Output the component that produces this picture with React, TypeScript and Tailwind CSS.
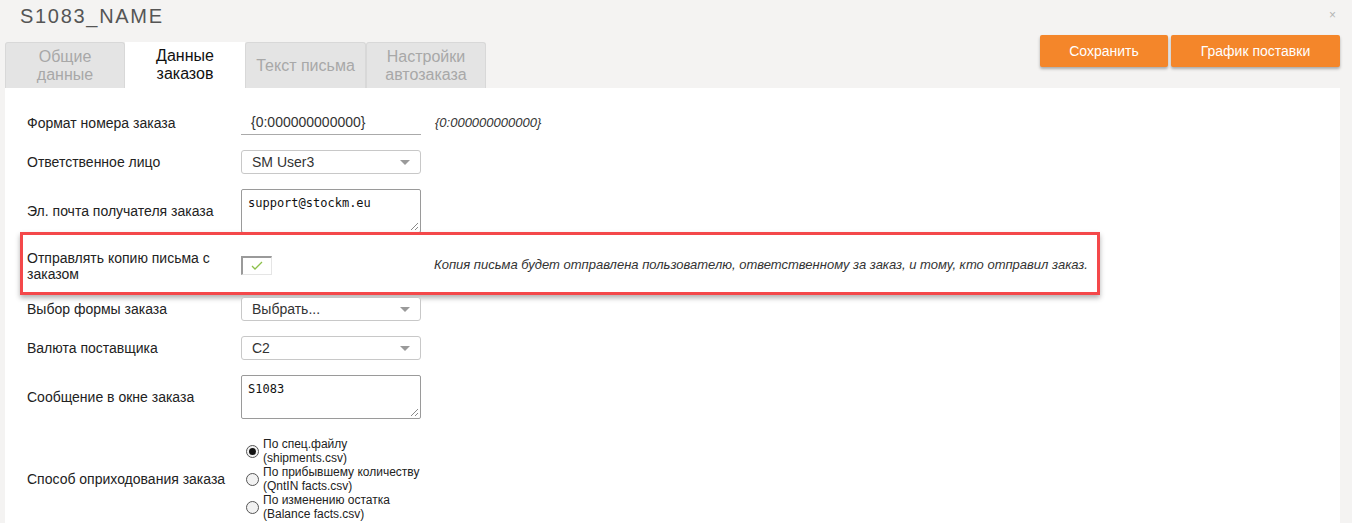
import React from "react";

const F = { fontFamily: '"Liberation Sans", Arial, sans-serif' };

function Arrow() {
  return (
    <svg width="10" height="6" viewBox="0 0 10 6" className="absolute right-[10px] top-[9px]">
      <path d="M0 0 L10 0 L5 5 Z" fill="#9a9a9a" />
    </svg>
  );
}

function Select({ value }: { value: string }) {
  return (
    <div className="relative w-[180px] h-[24px] border border-[#c8c8c8] rounded-[3px] bg-white pl-[10px] text-[14px] leading-[22px] text-[#333]">
      {value}
      <Arrow />
    </div>
  );
}

function TextArea({ value }: { value: string }) {
  return (
    <div className="relative w-[180px] h-[44px] border border-[#9a9a9a] rounded-[2px] bg-white pl-[6px] pt-[6px] text-[12px] leading-[14px] text-[#111]" style={{ fontFamily: '"DejaVu Sans Mono", monospace' }}>
      {value}
      <svg width="9" height="9" viewBox="0 0 9 9" className="absolute right-[1px] bottom-[1px]">
        <path d="M8 1 L1 8 M8 5 L5 8" stroke="#8a8a8a" strokeWidth="1" />
      </svg>
    </div>
  );
}

function Row({ label, children, h }: { label: React.ReactNode; children: React.ReactNode; h: string }) {
  return (
    <div className={`flex items-center ${h}`}>
      <div className="w-[214px] text-[14px] leading-[16px] text-[#222]">{label}</div>
      {children}
    </div>
  );
}

function Radio({ checked, l1, l2 }: { checked?: boolean; l1: string; l2: string }) {
  return (
    <div className="flex items-center">
      <div className="w-[13px] h-[13px] rounded-full border border-[#555] bg-[#f2f2f2] flex items-center justify-center ml-[5px] mr-[4px]">
        {checked && <div className="w-[7px] h-[7px] rounded-full bg-[#111]" />}
      </div>
      <div className="text-[12px] leading-[14px] text-[#222]">
        <div>{l1}</div>
        <div>{l2}</div>
      </div>
    </div>
  );
}

export default function App() {
  return (
    <div className="w-[1352px] h-[523px] bg-[#f4f3f2] overflow-hidden relative" style={F}>
      <div className="absolute right-[16px] top-[6px] text-[12px] text-[#b5b5b5]">×</div>
      <div className="pl-[20px] pt-[4px] h-[42px] text-[20px] leading-[24px] tracking-[1.7px] text-[#555]">S1083_NAME</div>
      <div className="flex items-end justify-between pl-[5px] pr-[12px]">
        <div className="flex h-[46px] items-end">
          <div className="w-[120px] h-[46px] bg-[#e4e4e4] border border-[#d8d8d8] border-b-0 rounded-t-[3px] flex items-center justify-center text-center text-[16px] leading-[18px] text-[#a8a8a8]">Общие<br />данные</div>
          <div className="w-[120px] h-[46px] bg-white flex items-center justify-center text-center text-[16px] leading-[18px] text-[#111]">Данные<br />заказов</div>
          <div className="w-[121px] h-[46px] bg-[#e4e4e4] border border-[#d8d8d8] border-b-0 rounded-t-[3px] flex items-center justify-center text-center text-[16px] leading-[18px] text-[#a8a8a8]">Текст письма</div>
          <div className="w-[120px] h-[46px] bg-[#e4e4e4] border border-[#d8d8d8] border-b-0 rounded-t-[3px] flex items-center justify-center text-center text-[16px] leading-[18px] text-[#a8a8a8]">Настройки<br />автозаказа</div>
        </div>
        <div className="flex gap-[3px] self-start -mt-[7px]">
          <button className="w-[128px] h-[32px] bg-[#f4862a] text-white text-[14px] rounded-[2px] shadow-[0_2px_3px_rgba(0,0,0,0.3)]">Сохранить</button>
          <button className="w-[169px] h-[32px] bg-[#f4862a] text-white text-[14px] rounded-[2px] shadow-[0_2px_3px_rgba(0,0,0,0.3)]">График поставки</button>
        </div>
      </div>
      <div className="ml-[5px] mr-[12px] h-[435px] bg-white pl-[22px] pt-[23px] flex flex-col gap-[15px]">
        <Row label="Формат номера заказа" h="h-[24px]">
          <div className="w-[180px] h-[24px] border-b border-[#aaa] pl-[10px] text-[14px] leading-[22px] text-[#333]">{"{0:000000000000}"}</div>
          <div className="ml-[14px] text-[13px] italic text-[#333]">{"{0:000000000000}"}</div>
        </Row>
        <Row label="Ответственное лицо" h="h-[24px]">
          <Select value="SM User3" />
        </Row>
        <Row label="Эл. почта получателя заказа" h="h-[44px]">
          <div className="self-start"><TextArea value="support@stockm.eu" /></div>
        </Row>
        <div className="relative">
          <div className="absolute left-[-7px] top-[-16px] w-[1080px] h-[63px] border-[3px] border-[#f4484a] shadow-[0_3px_5px_rgba(0,0,0,0.3)] pointer-events-none" />
          <Row label={<div className="pt-[2px]">Отправлять копию письма с<br />заказом</div>} h="h-[34px]">
            <div className="w-[31px] h-[19px] border-l-2 border-t-2 border-[#9a9a9a] border-r border-b border-r-[#e5e5e5] border-b-[#e5e5e5] bg-white flex items-center justify-center">
              <svg width="12" height="9" viewBox="0 0 12 9"><path d="M1 5 L4 8 L11 1" stroke="#8cc04a" strokeWidth="1.3" fill="none" /></svg>
            </div>
            <div className="ml-[162px] text-[13px] italic text-[#333]">Копия письма будет отправлена пользователю, ответственному за заказ, и тому, кто отправил заказ.</div>
          </Row>
        </div>
        <Row label="Выбор формы заказа" h="h-[24px]">
          <Select value="Выбрать..." />
        </Row>
        <Row label="Валюта поставщика" h="h-[24px]">
          <Select value="C2" />
        </Row>
        <Row label="Сообщение в окне заказа" h="h-[44px]">
          <div className="self-start"><TextArea value="S1083" /></div>
        </Row>
        <div className="mt-[3px]">
          <Row label="Способ оприходования заказа" h="h-[84px]">
            <div className="flex flex-col">
              <Radio checked l1="По спец.файлу" l2="(shipments.csv)" />
              <Radio l1="По прибывшему количеству" l2="(QntIN facts.csv)" />
              <Radio l1="По изменению остатка" l2="(Balance facts.csv)" />
            </div>
          </Row>
        </div>
      </div>
    </div>
  );
}
